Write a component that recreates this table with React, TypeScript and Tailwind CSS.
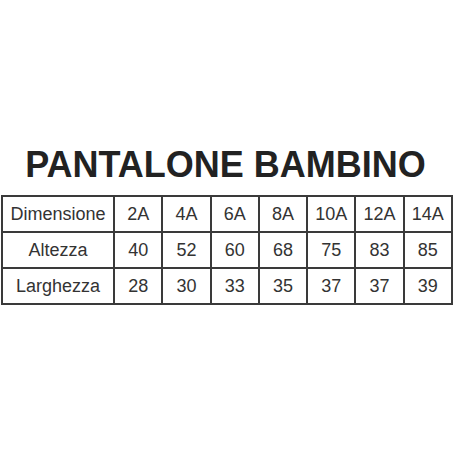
import { Fragment } from 'react';

const sizes = ['2A', '4A', '6A', '8A', '10A', '12A', '14A'];

const rows: { label: string; values: string[] }[] = [
  { label: 'Dimensione', values: sizes },
  { label: 'Altezza', values: ['40', '52', '60', '68', '75', '83', '85'] },
  { label: 'Larghezza', values: ['28', '30', '33', '35', '37', '37', '39'] },
];

export default function App() {
  return (
    <div
      className="w-[455px] h-[455px] bg-white pt-[145px]"
      style={{ fontFamily: '"Liberation Sans", Arial, sans-serif' }}
    >
      <h1 className="text-center text-[36px] leading-[40px] font-bold text-[#222222] mb-[10px] pr-[4px]">
        PANTALONE BAMBINO
      </h1>
      <div className="ml-[1px] w-[452px] grid grid-cols-[112px_repeat(7,1fr)] border-l-2 border-t-2 border-[#3a3a3a]">
        {rows.map((row) => (
          <Fragment key={row.label}>
            <div className="h-[36px] flex items-center justify-center border-r-2 border-b-2 border-[#3a3a3a] text-[18px] text-[#333333]">
              {row.label}
            </div>
            {row.values.map((v, i) => (
              <div
                key={i}
                className="h-[36px] flex items-center justify-center border-r-2 border-b-2 border-[#3a3a3a] text-[18px] text-[#333333]"
              >
                {v}
              </div>
            ))}
          </Fragment>
        ))}
      </div>
    </div>
  );
}
